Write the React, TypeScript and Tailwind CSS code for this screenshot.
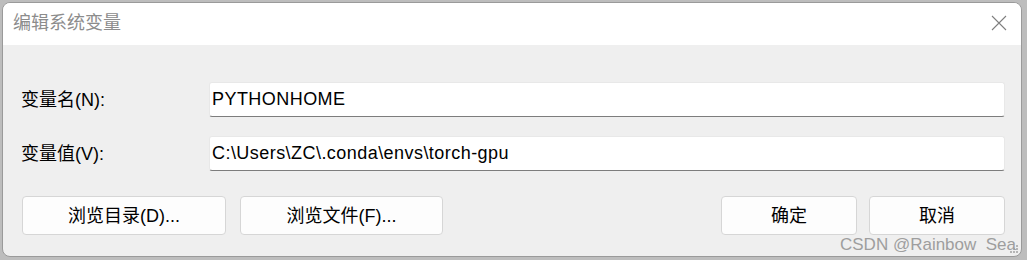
import React from 'react';

const font = { fontFamily: '"Liberation Sans", "Noto Sans CJK SC", sans-serif' };

function DlgButton({ label, width }: { label: string; width: string }) {
  return (
    <button
      className={`${width} h-[39px] bg-[#fdfdfd] border border-[#d6d6d6] rounded-[4px] text-[18px] text-black leading-none flex items-center justify-center`}
    >
      {label}
    </button>
  );
}

function Field({ label, value }: { label: string; value: string }) {
  return (
    <div className="flex items-center">
      <div className="w-[188px] text-[18px] text-black pt-[1px]">{label}</div>
      <div className="flex-1 h-[35px] bg-white border border-[#e8e8e8] border-b-[#7d7d7d] rounded-[3px] flex items-center pl-[2px] pb-[1px] text-[18px] tracking-[0.45px] text-black">
        {value}
      </div>
    </div>
  );
}

export default function App() {
  return (
    <div className="w-[1027px] h-[260px] bg-[#bdbdbd] pt-[2px] pl-[2px] overflow-hidden relative" style={font}>
      {/* 对话框窗体 */}
      <div className="w-[1020px] h-[255px] bg-[#efefef] rounded-[8px] border border-[#9a9a9a] overflow-hidden flex flex-col relative">
        <div className="h-[42px] bg-white flex items-center justify-between pl-[10px] pr-[14px] shrink-0">
          <span className="text-[18px] text-[#8c8c8c] pb-[2px]">编辑系统变量</span>
          <svg width="16" height="16" viewBox="0 0 16 16" className="mb-[2px]">
            <path d="M1 1 L15 15 M15 1 L1 15" stroke="#7f7f7f" strokeWidth="1.1" fill="none" />
          </svg>
        </div>

        <div className="flex-1 pl-[18px] pr-[16px] pt-[37px]">
          <div className="flex flex-col gap-[19px]">
            <Field label="变量名(N):" value="PYTHONHOME" />
            <Field label="变量值(V):" value="C:\Users\ZC\.conda\envs\torch-gpu" />
          </div>

          <div className="flex justify-between mt-[25px] pl-[1px]">
            <div className="flex gap-[14px]">
              <DlgButton label="浏览目录(D)..." width="w-[204px]" />
              <DlgButton label="浏览文件(F)..." width="w-[203px]" />
            </div>
            <div className="flex gap-[12px]">
              <DlgButton label="确定" width="w-[136px]" />
              <DlgButton label="取消" width="w-[136px]" />
            </div>
          </div>
        </div>

        {/* 右下角拖拽点 */}
        <svg width="10" height="10" viewBox="0 0 10 10" className="absolute right-[2px] bottom-[2px]">
          <rect x="7" y="1" width="2" height="2" fill="#b5b5b5" />
          <rect x="4" y="4" width="2" height="2" fill="#b5b5b5" />
          <rect x="7" y="4" width="2" height="2" fill="#b5b5b5" />
          <rect x="1" y="7" width="2" height="2" fill="#b5b5b5" />
          <rect x="4" y="7" width="2" height="2" fill="#b5b5b5" />
          <rect x="7" y="7" width="2" height="2" fill="#b5b5b5" />
        </svg>
      </div>

      {/* 水印 */}
      <div className="absolute left-[840px] top-[236px] text-[17px] text-[#9e9e9e] whitespace-pre leading-none">
        CSDN @Rainbow  Sea
      </div>
    </div>
  );
}
